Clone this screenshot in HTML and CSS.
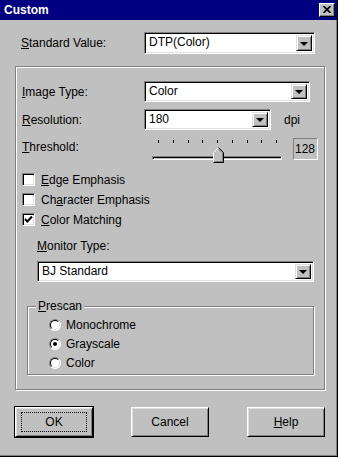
FILE: index.html
```html
<!DOCTYPE html>
<html>
<head>
<meta charset="utf-8">
<link rel="stylesheet" href="styles.css">
</head>
<body>
<div class="window">
  <div class="titlebar">
    <span class="title">Custom</span>
    <div class="closebtn"><svg width="8" height="7" viewBox="0 0 8 7"><path d="M0.5 0 L7.5 7 M7.5 0 L0.5 7" stroke="#000" stroke-width="1.7" fill="none"/></svg></div>
  </div>
  <div class="client">
    <div class="row top-row">
      <span class="lbl-top"><u>S</u>tandard Value:</span>
      <div class="combo combo-std"><span class="ctext">DTP(Color)</span><span class="arrow"><i class="tri"></i></span></div>
    </div>

    <div class="panel">
      <div class="row row-image">
        <span class="lbl"><u>I</u>mage Type:</span>
        <div class="combo combo-image"><span class="ctext">Color</span><span class="arrow"><i class="tri"></i></span></div>
      </div>
      <div class="row row-res">
        <span class="lbl"><u>R</u>esolution:</span>
        <div class="combo combo-res"><span class="ctext">180</span><span class="arrow"><i class="tri"></i></span></div>
        <span class="unit">dpi</span>
      </div>
      <div class="row row-thresh">
        <span class="lbl lbl-thresh"><u>T</u>hreshold:</span>
        <div class="slider">
          <div class="ticks"><i></i><i></i><i></i><i></i><i></i><i></i><i></i><i></i><i></i></div>
          <div class="track"></div>
          <svg class="thumb" width="11" height="16" viewBox="0 0 11 16">
            <polygon points="5.5,0.5 10.5,5.5 10.5,15.5 0.5,15.5 0.5,5.5" fill="#c0c0c0"/>
            <polyline points="0.5,15 0.5,5.5 5.5,0.5" stroke="#fff" fill="none"/>
            <polyline points="5.5,0.5 10.5,5.5 10.5,15.5 0.5,15.5" stroke="#000" fill="none"/>
            <polyline points="5.5,1.9 9.5,5.9 9.5,14.5 1.5,14.5" stroke="#808080" fill="none"/>
          </svg>
        </div>
        <div class="valbox">128</div>
      </div>

      <div class="checks">
        <div class="check"><span class="box"></span><span><u>E</u>dge Emphasis</span></div>
        <div class="check"><span class="box"></span><span>Ch<u>a</u>racter Emphasis</span></div>
        <div class="check"><span class="box"><svg width="9" height="9" viewBox="0 0 9 9"><path d="M1 4 L3.3 6.5 L8 1.5" stroke="#000" stroke-width="2" fill="none"/></svg></span><span><u>C</u>olor Matching</span></div>
      </div>

      <div class="monitor">
        <div class="lbl-monitor"><u>M</u>onitor Type:</div>
        <div class="combo combo-monitor"><span class="ctext">BJ Standard</span><span class="arrow"><i class="tri"></i></span></div>
      </div>

      <div class="group">
        <span class="legend"><u>P</u>rescan</span>
        <div class="radio"><span class="rbtn"></span><span>Monochrome</span></div>
        <div class="radio"><span class="rbtn on"></span><span>Grayscale</span></div>
        <div class="radio"><span class="rbtn"></span><span>Color</span></div>
      </div>
    </div>

    <div class="buttons">
      <div class="btn default"><span class="focus">OK</span></div>
      <div class="btn">Cancel</div>
      <div class="btn"><span><u>H</u>elp</span></div>
    </div>
  </div>
</div>
</body>
</html>
```

FILE: styles.css
```css
* { box-sizing: border-box; }
html, body { margin: 0; padding: 0; }
body {
  background: #fff;
  font-family: "Liberation Sans", Arial, sans-serif;
  font-size: 12px;
  color: #000;
}
u { text-decoration: underline; text-underline-offset: 1px; }

.window {
  width: 338px;
  height: 457px;
  background: #c0c0c0;
  border-right: 1px solid #000;
  border-bottom: 1px solid #000;
  box-shadow: inset -1px -1px 0 #808080;
  overflow: hidden;
}

.titlebar {
  height: 20px;
  background: #000080;
  display: flex;
  align-items: center;
  padding-left: 4px;
}
.title {
  color: #fff;
  font-weight: bold;
  font-size: 12px;
}
.closebtn {
  margin-left: auto;
  margin-right: 2px;
  width: 16px;
  height: 14px;
  background: #c0c0c0;
  border-top: 1px solid #fff;
  border-left: 1px solid #fff;
  border-right: 1px solid #000;
  border-bottom: 1px solid #000;
  box-shadow: inset -1px -1px 0 #808080;
  display: flex;
  align-items: center;
  justify-content: center;
  padding-bottom: 1px;
}
.closebtn svg { display: block; }

.client {
  padding-left: 15px;
}

.row {
  display: flex;
  align-items: center;
}
.top-row {
  margin-top: 12px;
  height: 22px;
}
.lbl-top {
  flex: none;
  width: 129px;
  padding-left: 6px;
}
.lbl {
  width: 122px;
  flex: none;
}

/* combo box */
.combo {
  display: flex;
  align-items: stretch;
  background: #fff;
  border-top: 1px solid #808080;
  border-left: 1px solid #808080;
  border-right: 1px solid #fff;
  border-bottom: 1px solid #fff;
  box-shadow: inset 1px 1px 0 #000, inset -1px -1px 0 #dfdfdf;
  padding: 2px;
  flex: none;
}
.combo-std { width: 171px; height: 22px; }
.combo-image { width: 166px; height: 21px; }
.combo-res { width: 127px; height: 21px; }
.combo-monitor { width: 277px; height: 21px; }
.ctext {
  flex: 1;
  padding-left: 2px;
  line-height: 15px;
  white-space: nowrap;
}
.arrow {
  width: 16px;
  flex: none;
  background: #c0c0c0;
  border-top: 1px solid #dfdfdf;
  border-left: 1px solid #dfdfdf;
  border-right: 1px solid #000;
  border-bottom: 1px solid #000;
  box-shadow: inset 1px 1px 0 #fff, inset -1px -1px 0 #808080;
  display: flex;
  align-items: center;
  justify-content: center;
}
.tri {
  width: 0;
  height: 0;
  border-left: 4px solid transparent;
  border-right: 4px solid transparent;
  border-top: 4px solid #000;
  margin-top: 1px;
}

/* panel */
.panel {
  margin-top: 12px;
  width: 310px;
  height: 324px;
  border: 1px solid #808080;
  box-shadow: inset 1px 1px 0 #fff, 1px 1px 0 #fff;
  padding: 14px 0 0 6px;
}
.row-image { height: 21px; }
.row-res { height: 21px; margin-top: 7px; }
.unit { margin-left: 13px; }

.row-thresh {
  margin-top: 4px;
  height: 30px;
  align-items: flex-start;
}
.lbl-thresh { padding-top: 6px; }
.slider {
  position: relative;
  width: 130px;
  height: 30px;
  margin-left: 8px;
}
.ticks {
  display: flex;
  justify-content: space-between;
  padding: 0 5px 0 6px;
  margin-top: 6px;
  height: 4px;
}
.ticks i {
  display: block;
  width: 1px;
  height: 3px;
  background: #000;
}
.track {
  margin-top: 12px;
  height: 4px;
  border-top: 1px solid #808080;
  border-left: 1px solid #808080;
  border-bottom: 1px solid #fff;
  border-right: 1px solid #fff;
  background: #c0c0c0;
  box-shadow: inset 1px 1px 0 #000;
}
.thumb {
  position: absolute;
  left: 61px;
  top: 13px;
  display: block;
}
.valbox {
  margin-left: 11px;
  margin-top: 4px;
  width: 25px;
  height: 22px;
  border-top: 1px solid #808080;
  border-left: 1px solid #808080;
  border-right: 1px solid #fff;
  border-bottom: 1px solid #fff;
  text-align: right;
  padding-right: 2px;
  line-height: 20px;
}

/* checkboxes */
.checks {
  margin-top: 9px;
  display: flex;
  flex-direction: column;
  gap: 7px;
}
.check {
  display: flex;
  align-items: center;
  height: 13px;
}
.box {
  width: 13px;
  height: 13px;
  background: #fff;
  border-top: 1px solid #808080;
  border-left: 1px solid #808080;
  border-right: 1px solid #fff;
  border-bottom: 1px solid #fff;
  box-shadow: inset 1px 1px 0 #000, inset -1px -1px 0 #dfdfdf;
  margin-right: 6px;
  display: flex;
  align-items: center;
  justify-content: center;
}
.box svg { display: block; }

/* monitor */
.monitor {
  padding-left: 15px;
  margin-top: 13px;
}
.lbl-monitor {
  line-height: 14px;
  margin-bottom: 8px;
}

/* group box */
.group {
  position: relative;
  margin-top: 24px;
  margin-left: 5px;
  width: 287px;
  height: 69px;
  border: 1px solid #808080;
  box-shadow: inset 1px 1px 0 #fff, 1px 1px 0 #fff;
  padding: 12px 0 0 21px;
  display: flex;
  flex-direction: column;
  gap: 7px;
}
.legend {
  position: absolute;
  left: 8px;
  top: -8px;
  padding: 0 2px;
  background: #c0c0c0;
  line-height: 14px;
}
.radio {
  display: flex;
  align-items: center;
  height: 12px;
}
.rbtn {
  position: relative;
  width: 12px;
  height: 12px;
  border-radius: 50%;
  border: 1px solid;
  border-color: #808080 #fff #fff #808080;
  background: #fff;
  margin-right: 5px;
}
.rbtn::before {
  content: "";
  position: absolute;
  inset: 0;
  border-radius: 50%;
  border: 1px solid;
  border-color: #000 #dfdfdf #dfdfdf #000;
}
.rbtn.on::after {
  content: "";
  position: absolute;
  left: 3px;
  top: 3px;
  width: 4px;
  height: 4px;
  border-radius: 50%;
  background: #000;
}

/* buttons */
.buttons {
  width: 310px;
  margin-top: 17px;
  display: flex;
  justify-content: space-between;
}
.btn {
  width: 78px;
  height: 30px;
  border-top: 1px solid #fff;
  border-left: 1px solid #fff;
  border-right: 1px solid #000;
  border-bottom: 1px solid #000;
  box-shadow: inset 1px 1px 0 #dfdfdf, inset -1px -1px 0 #808080;
  display: flex;
  align-items: center;
  justify-content: center;
}
.btn.default {
  outline: 1px solid #000;
}
.focus {
  width: 66px;
  height: 20px;
  border: 1px dotted #000;
  display: flex;
  align-items: center;
  justify-content: center;
}
```
